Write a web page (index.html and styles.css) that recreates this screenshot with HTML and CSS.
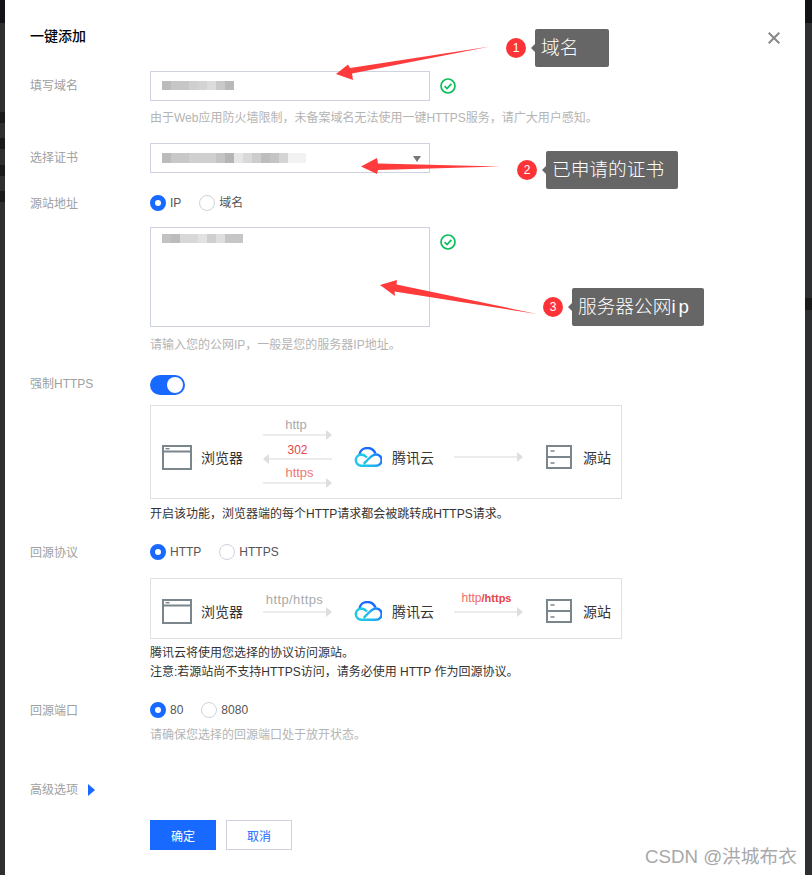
FILE: index.html
```html
<!DOCTYPE html>
<html lang="en">

<head>
    <meta charset="UTF-8">
    <title>一键添加</title>
    <link rel="stylesheet" href="styles.css">
</head>

<body>

    <!-- shared icons -->
    <svg class="defs" width="0" height="0">
        <defs>
            <linearGradient id="cloud-fill" gradientUnits="userSpaceOnUse" x1="2" y1="19" x2="26" y2="5">
                <stop offset="0" stop-color="#21d0e0"/>
                <stop offset="0.55" stop-color="#22b4f0"/>
                <stop offset="1" stop-color="#1769ff"/>
            </linearGradient>
            <symbol id="icon-check" viewBox="0 0 16 16">
                <circle cx="8" cy="8" r="7" fill="none" stroke="#0abf5b" stroke-width="1.7"/>
                <path d="M4.6 8.1l2.4 2.4 4.4-4.6" fill="none" stroke="#0abf5b" stroke-width="1.7"/>
            </symbol>
            <symbol id="icon-browser" viewBox="0 0 30 25">
                <path d="M1 1h28v23H1zM1 6.5h28" fill="none" stroke="#7b868c" stroke-width="2"/>
                <path d="M3.500 3.700h4" fill="none" stroke="#7b868c" stroke-width="1.400"/>
            </symbol>
            <symbol id="icon-cloud" viewBox="0 0 28 20">
                <path d="M5.500 7.500C6 3.500 9.500 1 13.500 1c3.500 0 6.500 2 8 5.500" fill="none" stroke="#1769ff" stroke-width="2.400"/>
                <path d="M8 18.800h14a5.600 5.600 0 0 0 0-11.300c-3.500 0-5.500 2.500-8.500 5.500l-3.800 3.800" fill="none" stroke="url(#cloud-fill)" stroke-width="2.400"/>
                <path d="M8 18.800a5.600 5.600 0 0 1-1-11.300c2.500 0 4.300 1.200 6 3" fill="none" stroke="#21c8e6" stroke-width="2.400"/>
            </symbol>
            <symbol id="icon-server" viewBox="0 0 26 24">
                <path d="M1 1h24v22H1zM1 12h24" fill="none" stroke="#7b868c" stroke-width="2"/>
                <path d="M4.500 6h4M4.500 18h4" fill="none" stroke="#7b868c" stroke-width="1.500"/>
            </symbol>
            <symbol id="icon-arrow" viewBox="0 0 69 10">
                <path d="M0 4h63v2H0z" fill="#ececec"/>
                <path d="M63 0l6 5-6 5z" fill="#dedede"/>
            </symbol>
        </defs>
    </svg>

    <span class="peek peek-a"></span>
    <span class="peek peek-b"></span>
    <span class="peek peek-c"></span>
    <span class="peek peek-d"></span>
    <span class="peek peek-e"></span>

    <div class="modal">

        <div class="modal-head">
            <h1 class="modal-title">一键添加</h1>
            <svg class="close" width="12" height="12" viewBox="0 0 12 12">
                <path d="M.7.7l10.600 10.600M11.300.7L.7 11.300" fill="none" stroke="#888" stroke-width="2"/>
            </svg>
        </div>

        <div class="row row-domain">
            <div class="row-label label-input">填写域名</div>
            <div class="row-body">
                <div class="field">
                    <div class="input"><span class="mosaic mosaic-domain"></span></div>
                    <svg class="check" width="16" height="16"><use href="#icon-check"/></svg>
                </div>
                <p class="hint hint-domain">由于Web应用防火墙限制，未备案域名无法使用一键HTTPS服务，请广大用户感知。</p>
            </div>
        </div>

        <div class="row row-cert">
            <div class="row-label label-input">选择证书</div>
            <div class="row-body">
                <div class="input select">
                    <span class="mosaic mosaic-cert"></span>
                    <span class="caret"></span>
                </div>
            </div>
        </div>

        <div class="row row-source">
            <div class="row-label label-radio">源站地址</div>
            <div class="row-body">
                <div class="radios">
                    <label class="radio is-checked">IP</label>
                    <label class="radio">域名</label>
                </div>
                <div class="field field-area">
                    <div class="input textarea"><span class="mosaic mosaic-ip"></span></div>
                    <svg class="check" width="16" height="16"><use href="#icon-check"/></svg>
                </div>
                <p class="hint hint-area">请输入您的公网IP，一般是您的服务器IP地址。</p>
            </div>
        </div>

        <div class="row row-force">
            <div class="row-label label-switch">强制HTTPS</div>
            <div class="row-body">
                <div class="switch"></div>
                <div class="flow flow-tall">
                    <svg class="ico-browser" width="30" height="25"><use href="#icon-browser"/></svg>
                    <span class="flow-name name-browser">浏览器</span>
                    <div class="link link-stack">
                        <div class="link-text shift-left">http</div>
                        <svg class="arrow" width="69" height="10"><use href="#icon-arrow"/></svg>
                        <div class="link-text text-red">302</div>
                        <svg class="arrow arrow-back" width="69" height="10"><use href="#icon-arrow"/></svg>
                        <div class="link-text text-pink">https</div>
                        <svg class="arrow" width="69" height="10"><use href="#icon-arrow"/></svg>
                    </div>
                    <svg class="ico-cloud" width="28" height="20"><use href="#icon-cloud"/></svg>
                    <span class="flow-name name-cloud">腾讯云</span>
                    <div class="link">
                        <svg class="arrow" width="69" height="10"><use href="#icon-arrow"/></svg>
                    </div>
                    <svg class="ico-server" width="26" height="24"><use href="#icon-server"/></svg>
                    <span class="flow-name name-origin">源站</span>
                </div>
                <p class="note">开启该功能，浏览器端的每个HTTP请求都会被跳转成HTTPS请求。</p>
            </div>
        </div>

        <div class="row row-proto">
            <div class="row-label label-radio">回源协议</div>
            <div class="row-body">
                <div class="radios">
                    <label class="radio is-checked">HTTP</label>
                    <label class="radio">HTTPS</label>
                </div>
                <div class="flow flow-short">
                    <svg class="ico-browser" width="30" height="25"><use href="#icon-browser"/></svg>
                    <span class="flow-name name-browser">浏览器</span>
                    <div class="link link-single">
                        <div class="link-text text-proto">http/https</div>
                        <svg class="arrow" width="69" height="10"><use href="#icon-arrow"/></svg>
                    </div>
                    <svg class="ico-cloud" width="28" height="20"><use href="#icon-cloud"/></svg>
                    <span class="flow-name name-cloud">腾讯云</span>
                    <div class="link link-single">
                        <div class="link-text text-mixed">http<b>/https</b></div>
                        <svg class="arrow" width="69" height="10"><use href="#icon-arrow"/></svg>
                    </div>
                    <svg class="ico-server" width="26" height="24"><use href="#icon-server"/></svg>
                    <span class="flow-name name-origin">源站</span>
                </div>
                <p class="note">腾讯云将使用您选择的协议访问源站。</p>
                <p class="note">注意:若源站尚不支持HTTPS访问，请务必使用 HTTP 作为回源协议。</p>
            </div>
        </div>

        <div class="row row-port">
            <div class="row-label label-radio">回源端口</div>
            <div class="row-body">
                <div class="radios">
                    <label class="radio is-checked">80</label>
                    <label class="radio">8080</label>
                </div>
                <p class="hint hint-port">请确保您选择的回源端口处于放开状态。</p>
            </div>
        </div>

        <div class="row row-advanced">
            <div class="row-label label-advanced">高级选项<span class="tri"></span></div>
        </div>

        <div class="row row-actions">
            <div class="row-label"></div>
            <div class="row-body buttons">
                <button class="btn btn-primary">确定</button>
                <button class="btn">取消</button>
            </div>
        </div>

        <!-- red arrows drawn on top of the screenshot -->
        <svg class="marks" width="800" height="875" viewBox="5 0 800 875">
            <path d="M336 74L348 64.500 350 68 490 46.500 352 73.500 353 80z" fill="#ff3b3b"/>
            <path d="M361 166.500L377 158 378 163.500 500 166.500 378 170 377 174z" fill="#ff3b3b"/>
            <path d="M380 285L397 280 396.500 284.500 537 314 394.500 291.500 395 296z" fill="#ff3b3b"/>
        </svg>

        <div class="tip tip-one">
            <span class="tip-num">1</span>
            <span class="tip-text tip-w1">域名</span>
        </div>
        <div class="tip tip-two">
            <span class="tip-num">2</span>
            <span class="tip-text tip-w2">已申请的证书</span>
        </div>
        <div class="tip tip-three">
            <span class="tip-num">3</span>
            <span class="tip-text tip-w2">服务器公网<span class="tip-latin">ip</span></span>
        </div>

        <div class="watermark">CSDN @洪城布衣</div>
    </div>

</body>

</html>
```

FILE: styles.css
```css
*,
*::before,
*::after {
    box-sizing: border-box;
}

html,
body {
    margin: 0;
    height: 875px;
    overflow: hidden;
}

body {
    position: relative;
    font-family: "Liberation Sans", "Noto Sans CJK SC", sans-serif;
    font-size: 12px;
    color: #333;
    background: linear-gradient(#121317 23px, #2e2f31 23px);
}

.defs {
    position: absolute;
}

/* bits of the page behind the dialog */
.peek {
    position: absolute;
    width: 5px;
    height: 11px;
    background: #1a1a1a;
}

.peek-a { left: 0; top: 112px; }
.peek-b { left: 0; top: 138px; }
.peek-c { left: 0; top: 165px; }
.peek-d { left: 0; top: 191px; }
.peek-e { left: 805px; top: 298px; width: 7px; height: 12px; }

.modal {
    position: relative;
    width: 800px;
    height: 875px;
    margin-left: 5px;
    padding: 27px 25px 0;
    background: #fff;
}

.modal-head {
    display: flex;
    justify-content: space-between;
    height: 18px;
}

.modal-title {
    margin: 0;
    font-size: 14px;
    line-height: 18px;
    font-weight: 500;
    color: #000;
}

.close {
    margin-top: 5px;
}

.row {
    display: flex;
}

.row-label {
    flex: none;
    width: 120px;
    color: #a0a0a0;
}

.row-body {
    flex: 1;
}

.label-input { line-height: 30px; }
.label-radio { line-height: 22px; }
.label-switch { line-height: 18px; }
.label-advanced { display: flex; align-items: center; line-height: 20px; }

.row-domain { margin-top: 26px; }
.row-cert { margin-top: 16px; }
.row-source { margin-top: 20px; }
.row-force { margin-top: 21px; }
.row-proto { margin-top: 18px; }
.row-port { margin-top: 18px; }
.row-advanced { margin-top: 36px; }
.row-actions { margin-top: 20px; }

.field {
    display: flex;
    gap: 10px;
}

.field-area {
    margin-top: 14px;
}

.check {
    margin-top: 7px;
}

.input {
    width: 280px;
    height: 30px;
    padding: 9px 11px;
    border: 1px solid #cdd2de;
}

.select {
    display: flex;
    justify-content: space-between;
    padding-right: 8px;
}

.textarea {
    height: 100px;
    padding-top: 6px;
}

.caret {
    width: 0;
    height: 0;
    margin-top: 3px;
    border-left: 4px solid transparent;
    border-right: 4px solid transparent;
    border-top: 6px solid #777;
}

/* the blurred out values */
.mosaic {
    display: block;
    height: 9px;
}

.mosaic-domain {
    width: 72px;
    background: linear-gradient(90deg, #bbb 0 9px, #c6c6c6 9px 27px, #cfcfcf 27px 36px, #d3d3d3 36px 45px, #dcdcdc 45px 54px, #c9c9c9 54px 63px, #b9b9b9 63px 72px);
}

.mosaic-cert {
    width: 144px;
    height: 10px;
    background: linear-gradient(90deg, #bbb 0 9px, #c8c8c8 9px 27px, #cfcfcf 27px 54px, #c4c4c4 54px 63px, #b5b5b5 63px 72px, #e6e6e6 72px 81px, #d9d9d9 81px 90px, #cdcdcd 90px 99px, #bdbdbd 99px 108px, #c4c4c4 108px 117px, #d4d4d4 117px 126px, #f2f2f2 126px 144px);
}

.mosaic-ip {
    width: 81px;
    background: linear-gradient(90deg, #c2c2c2 0 9px, #bcbcbc 9px 18px, #d8d8d8 18px 36px, #e2e2e2 36px 45px, #cfcfcf 45px 54px, #dedede 54px 63px, #c6c6c6 63px 81px);
}

.hint {
    margin: 0;
    line-height: 18px;
    color: #b4b4b4;
}

.hint-domain { margin-top: 8px; }
.hint-area { margin-top: 9px; }
.hint-port { margin-top: 6px; }

.radios {
    display: flex;
    gap: 18px;
    height: 20px;
}

.radio {
    display: flex;
    align-items: center;
    gap: 4px;
    color: #555;
    line-height: 20px;
}

.radio::before {
    content: "";
    flex: none;
    width: 16px;
    height: 16px;
    border: 1px solid #cdd2de;
    border-radius: 50%;
}

.radio.is-checked::before {
    border: 5px solid #1769ff;
}

.switch {
    position: relative;
    width: 35px;
    height: 20px;
    border-radius: 10px;
    background: #1769ff;
}

.switch::after {
    content: "";
    position: absolute;
    top: 2px;
    right: 2px;
    width: 16px;
    height: 16px;
    border-radius: 50%;
    background: #fff;
}

.flow {
    display: flex;
    align-items: center;
    width: 472px;
    margin-top: 10px;
    padding-left: 11px;
    border: 1px solid #dfe1e5;
}

.flow-tall {
    height: 94px;
    padding-top: 10px;
}

.flow-short {
    height: 61px;
    margin-top: 16px;
    padding-top: 5px;
}

.flow-name {
    flex: none;
    font-size: 14px;
    color: #333;
}

.name-browser { margin-left: 9px; width: 42px; }
.name-cloud { margin-left: 10px; width: 42px; }
.name-origin { margin-left: 11px; }

.ico-cloud { margin-left: 22px; }
.ico-server { margin-left: 23px; }

.link {
    flex: none;
    width: 69px;
    margin-left: 20px;
    text-align: center;
}

.link-stack { margin-bottom: 11px; }
.link-single { margin-bottom: 12px; }

.arrow {
    display: block;
}

.arrow-back {
    transform: scaleX(-1);
}

.link-text {
    height: 14px;
    font-size: 13px;
    line-height: 18px;
    color: #aaa;
}

.shift-left { padding-right: 3px; }
.text-red { color: #e54545; font-size: 12px; line-height: 20px; }
.text-pink { color: #f07878; padding-left: 4px; }
.text-proto { line-height: 13px; padding-right: 6px; letter-spacing: 0.4px; }
.text-mixed { color: #ee6a6a; font-size: 12px; line-height: 10px; padding-right: 4px; }
.text-mixed b { color: #e54545; font-size: 11px; }

.note {
    margin: 0;
    line-height: 19px;
    color: #333;
}

.flow-tall + .note { margin-top: 6px; }
.flow-short + .note { margin-top: 5px; }

.tri {
    width: 0;
    height: 0;
    margin-left: 10px;
    border-top: 6px solid transparent;
    border-bottom: 6px solid transparent;
    border-left: 7px solid #1769ff;
}

.buttons {
    display: flex;
    gap: 10px;
}

.btn {
    width: 66px;
    height: 30px;
    padding: 0;
    border: 1px solid #cdd2de;
    background: #fff;
    font: inherit;
    color: #1769ff;
}

.btn-primary {
    border-color: #1769ff;
    background: #1769ff;
    color: #fff;
}

/* annotations over the form */
.marks {
    position: absolute;
    left: 0;
    top: 0;
    pointer-events: none;
}

.tip {
    position: absolute;
    display: flex;
    align-items: center;
    gap: 9px;
}

.tip-one { left: 501px; top: 29px; }
.tip-two { left: 512px; top: 151px; }
.tip-three { left: 538px; top: 288px; }

.tip-num {
    width: 20px;
    height: 20px;
    border-radius: 50%;
    background: #fc3438;
    color: #fff;
    font-size: 12px;
    line-height: 20px;
    text-align: center;
}

.tip-text {
    position: relative;
    height: 38px;
    padding-left: 6px;
    border-radius: 2px;
    background: #666;
    color: #fff;
    font-size: 18.700px;
    font-weight: 300;
    line-height: 38px;
}

.tip-text::before {
    content: "";
    position: absolute;
    left: -4px;
    top: 15px;
    border-top: 4px solid transparent;
    border-bottom: 4px solid transparent;
    border-right: 4px solid #666;
}

.tip-w1 { width: 74px; }
.tip-w2 { width: 132px; }
.tip-latin { letter-spacing: 3px; }

.watermark {
    position: absolute;
    left: 640px;
    top: 846px;
    font-size: 18.700px;
    line-height: 22px;
    color: #a8a8a8;
}
```
